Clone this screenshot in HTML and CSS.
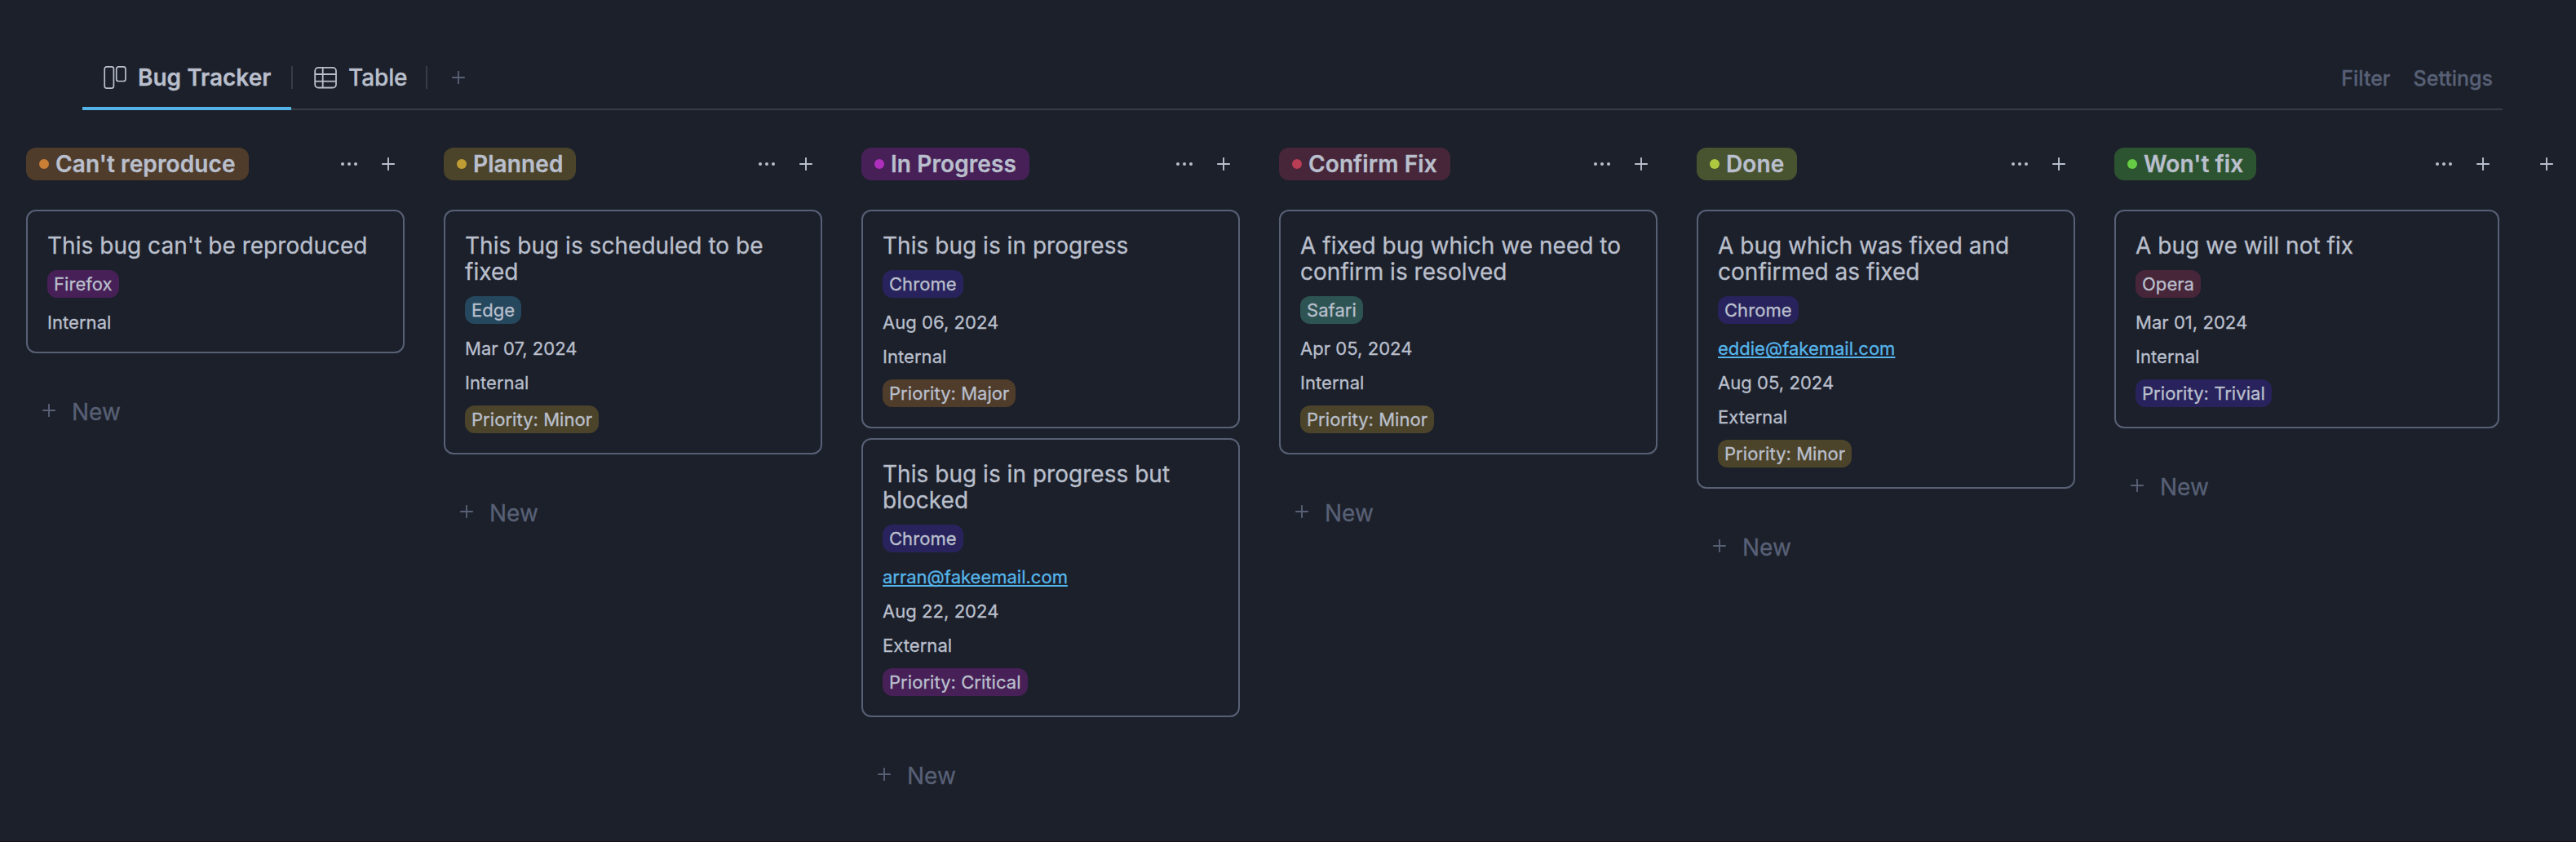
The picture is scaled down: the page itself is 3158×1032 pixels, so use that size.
FILE: index.html
```html
<!DOCTYPE html>
<html lang="en">
<head>
<meta charset="utf-8">
<title>Bug Tracker</title>
<link rel="stylesheet" href="styles.css">
</head>
<body>
<svg class="defs" aria-hidden="true">
  <symbol id="plus" viewBox="0 0 16 16"><path d="M8 .8v14.4M.8 8h14.4" fill="none" stroke="currentColor" stroke-width="1.9" stroke-linecap="round"/></symbol>
  <symbol id="dots" viewBox="0 0 20 4"><g fill="currentColor"><circle cx="2" cy="2" r="2"/><circle cx="10" cy="2" r="2"/><circle cx="18" cy="2" r="2"/></g></symbol>
</svg>

<header class="toolbar">
  <nav class="tabs">
    <a class="tab tab-active">
      <svg class="tab-icon" viewBox="0 0 28 28"><g fill="none" stroke="currentColor" stroke-width="1.7"><rect x="1.2" y=".9" width="11.2" height="26.2" rx="2.6"/><rect x="15.7" y=".9" width="11.2" height="17.6" rx="2.6"/></g></svg>
      <span>Bug Tracker</span>
    </a>
    <a class="tab">
      <svg class="tab-icon" viewBox="0 0 28 28"><g fill="none" stroke="currentColor" stroke-width="1.8"><rect x="1.2" y="1.9" width="25.8" height="24.6" rx="4"/><path d="M1.2 10h25.6M1.2 18.7h25.6M10.7 1.9v24.6"/></g></svg>
      <span>Table</span>
    </a>
    <a class="tab tab-add"><svg class="plus"><use href="#plus"/></svg></a>
  </nav>
  <div class="actions"><span>Filter</span><span>Settings</span></div>
</header>

<main class="board">
  <section class="column">
    <header class="column-head">
      <h2 class="status orange">Can't reproduce</h2>
      <svg class="dots"><use href="#dots"/></svg><svg class="plus"><use href="#plus"/></svg>
    </header>
    <article class="card">
      <h3>This bug can't be reproduced</h3>
      <div class="props"><span class="tag purple">Firefox</span><span>Internal</span></div>
    </article>
    <div class="new"><svg class="plus"><use href="#plus"/></svg><span>New</span></div>
  </section>

  <section class="column">
    <header class="column-head">
      <h2 class="status yellow">Planned</h2>
      <svg class="dots"><use href="#dots"/></svg><svg class="plus"><use href="#plus"/></svg>
    </header>
    <article class="card">
      <h3>This bug is scheduled to be fixed</h3>
      <div class="props"><span class="tag blue">Edge</span><span>Mar 07, 2024</span><span>Internal</span><span class="tag yellow">Priority: Minor</span></div>
    </article>
    <div class="new"><svg class="plus"><use href="#plus"/></svg><span>New</span></div>
  </section>

  <section class="column">
    <header class="column-head">
      <h2 class="status purple">In Progress</h2>
      <svg class="dots"><use href="#dots"/></svg><svg class="plus"><use href="#plus"/></svg>
    </header>
    <article class="card">
      <h3>This bug is in progress</h3>
      <div class="props"><span class="tag indigo">Chrome</span><span>Aug 06, 2024</span><span>Internal</span><span class="tag orange">Priority: Major</span></div>
    </article>
    <article class="card">
      <h3>This bug is in progress but blocked</h3>
      <div class="props"><span class="tag indigo">Chrome</span><a class="email">arran@fakeemail.com</a><span>Aug 22, 2024</span><span>External</span><span class="tag purple">Priority: Critical</span></div>
    </article>
    <div class="new"><svg class="plus"><use href="#plus"/></svg><span>New</span></div>
  </section>

  <section class="column">
    <header class="column-head">
      <h2 class="status red">Confirm Fix</h2>
      <svg class="dots"><use href="#dots"/></svg><svg class="plus"><use href="#plus"/></svg>
    </header>
    <article class="card">
      <h3>A fixed bug which we need to confirm is resolved</h3>
      <div class="props"><span class="tag teal">Safari</span><span>Apr 05, 2024</span><span>Internal</span><span class="tag yellow">Priority: Minor</span></div>
    </article>
    <div class="new"><svg class="plus"><use href="#plus"/></svg><span>New</span></div>
  </section>

  <section class="column">
    <header class="column-head">
      <h2 class="status lime">Done</h2>
      <svg class="dots"><use href="#dots"/></svg><svg class="plus"><use href="#plus"/></svg>
    </header>
    <article class="card">
      <h3>A bug which was fixed and confirmed as fixed</h3>
      <div class="props"><span class="tag indigo">Chrome</span><a class="email">eddie@fakemail.com</a><span>Aug 05, 2024</span><span>External</span><span class="tag yellow">Priority: Minor</span></div>
    </article>
    <div class="new"><svg class="plus"><use href="#plus"/></svg><span>New</span></div>
  </section>

  <section class="column column-last">
    <header class="column-head">
      <h2 class="status green">Won't fix</h2>
      <svg class="dots"><use href="#dots"/></svg><svg class="plus"><use href="#plus"/></svg>
    </header>
    <article class="card">
      <h3>A bug we will not fix</h3>
      <div class="props"><span class="tag red">Opera</span><span>Mar 01, 2024</span><span>Internal</span><span class="tag indigo">Priority: Trivial</span></div>
    </article>
    <div class="new"><svg class="plus"><use href="#plus"/></svg><span>New</span></div>
  </section>

  <div class="add-column"><svg class="plus"><use href="#plus"/></svg></div>
</main>
</body>
</html>
```
FILE: styles.css
```css
* { box-sizing: border-box; }

body {
  margin: 0;
  height: 1032px;
  overflow: hidden;
  background: #1c202a;
  border-bottom: 1px solid #190f1d;
  color: #b9bfcc;
  font-family: Inter, "Liberation Sans", sans-serif;
  -webkit-text-stroke: 0.3px currentColor;
}

h2, h3 { margin: 0; }
.defs { display: none; }
.plus { width: 16px; height: 16px; flex: none; }
.dots { width: 20px; height: 4px; flex: none; }

/* Toolbar */
.toolbar {
  display: flex;
  justify-content: space-between;
  margin: 0 90px 0 101px;
  height: 135px;
  padding-top: 59px;
  box-shadow: inset 0 -2px #383c46;
}
.tabs { display: flex; }
.tab {
  display: flex;
  align-items: center;
  gap: 14px;
  width: 165px;
  height: 76px;
  padding: 0 0 4px 26px;
  font-size: 28px;
  font-weight: 500;
  letter-spacing: -0.1px;
  background: linear-gradient(#383c46, #383c46) right 22px / 2px 28px no-repeat;
}
.tab-icon { width: 28px; height: 28px; flex: none; }
.tab-active {
  width: 258px;
  font-weight: 600;
  letter-spacing: 0;
  background:
    linear-gradient(#383c46, #383c46) right 22px / 2px 28px no-repeat,
    linear-gradient(#54b4e8, #54b4e8) left bottom / 256px 4px no-repeat;
}
.tab-add { width: auto; padding-left: 30px; background: none; color: #586076; }
.actions {
  display: flex;
  gap: 28px;
  height: 76px;
  align-items: center;
  padding: 0 12px 2px 0;
  color: #586076;
  font-size: 25px;
  font-weight: 500;
}

/* Board */
.board { display: flex; padding: 46px 0 0 32px; }
.column { flex: none; width: 464px; margin-right: 48px; }
.column-last { width: 472px; margin-right: 0; }
.column-head {
  display: flex;
  align-items: center;
  height: 40px;
  margin-bottom: 36px;
  padding-right: 12px;
}
.column-head .dots { margin: 0 30px 0 auto; }
.status {
  display: flex;
  align-items: center;
  gap: 8px;
  height: 40px;
  padding: 0 16px;
  border-radius: 12px;
  font-size: 28px;
  font-weight: 600;
  letter-spacing: 0.1px;
}
.status::before {
  content: "";
  width: 12px;
  height: 12px;
  border-radius: 50%;
  background: var(--dot);
}
.add-column { display: flex; align-items: center; height: 40px; margin-left: 50px; }

.card {
  padding: 26px 24px 23px;
  border: 2px solid #586076;
  border-radius: 12px;
}
.card + .card { margin-top: 12px; }
.card h3 { font-size: 28px; font-weight: 400; line-height: 32px; letter-spacing: 0.03px; }
.props {
  display: flex;
  flex-direction: column;
  align-items: flex-start;
  gap: 16px;
  margin-top: 15px;
  font-size: 22px;
  line-height: 26px;
  letter-spacing: 0.05px;
}
.tag {
  height: 34px;
  margin: -1px 0 1px;
  padding: 0 8px;
  border-radius: 12px;
  line-height: 35px;
}
.email {
  color: #55b5ea;
  text-decoration: underline;
  text-decoration-thickness: 1.5px;
  text-underline-offset: 2px;
  text-decoration-skip-ink: none;
  letter-spacing: 0;
}

.orange { background: #4f3c2b; --dot: #ca7f35; }
.yellow { background: #4c442a; --dot: #c09d33; }
.purple { background: #462057; --dot: #ae2fbc; }
.red { background: #472639; --dot: #b83d55; }
.lime { background: #485330; --dot: #aec940; }
.green { background: #2d5430; --dot: #66cc44; }
.indigo { background: #28235c; }
.blue { background: #25485e; }
.teal { background: #2d5452; }

.new {
  display: flex;
  align-items: center;
  gap: 20px;
  margin: 52px 0 0 20px;
  height: 40px;
  color: #586076;
  font-size: 28px;
}
.new .plus { margin-bottom: 4px; }
.new span { line-height: 40px; }
```
